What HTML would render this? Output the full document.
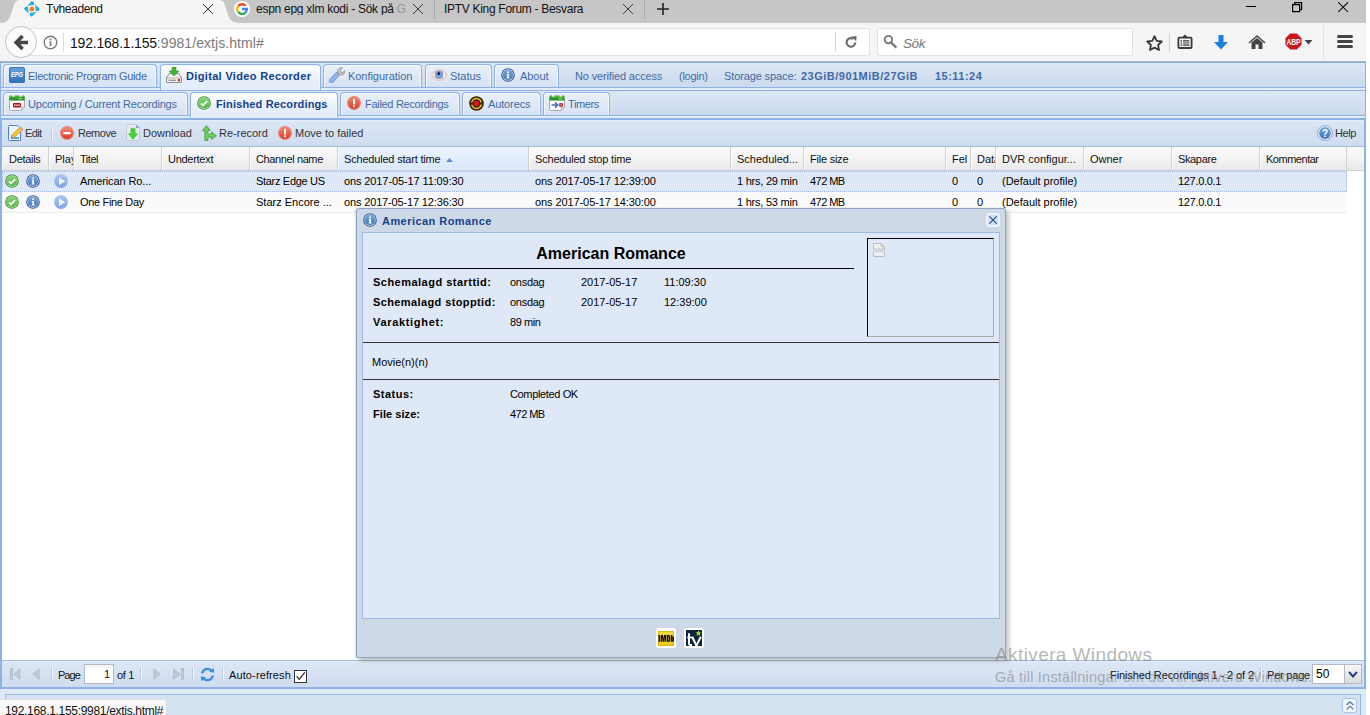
<!DOCTYPE html>
<html>
<head>
<meta charset="utf-8">
<title><i style="letter-spacing:-0.38px">Tvheadend</i></title>
<style>
*{box-sizing:border-box;margin:0;padding:0}
html,body{width:1370px;height:715px;overflow:hidden;background:#fff}
body{font-family:"Liberation Sans",sans-serif;font-size:11px;color:#000;position:relative}
.abs{position:absolute}
i{font-style:normal}
.t{position:absolute;white-space:nowrap;line-height:1}
/* ---------- browser chrome ---------- */
#tabbar{left:0;top:0;width:1366px;height:23px;background:#c6c6c6}
#navbar{left:0;top:23px;width:1366px;height:39px;background:#f5f5f5}
.btab{font-size:12px;color:#111;top:3px}
#urlbar{left:22px;top:28px;width:848px;height:28px;background:#fff;border:1px solid #e2e2e2;border-radius:2px}
#searchbar{left:877px;top:28px;width:256px;height:28px;background:#fff;border:1px solid #e2e2e2;border-radius:2px}
/* ---------- page ---------- */
#page{left:0;top:0;width:1366px;height:715px;overflow:hidden}
.tab{position:absolute;height:23px;border:1px solid #8db2e3;border-bottom:none;border-radius:4px 4px 0 0;background:linear-gradient(#e9f0fb,#d6e2f3);box-shadow:inset 1px 1px 0 #f4f8fd, inset -1px 0 0 #f4f8fd;color:#416aa3;font-size:11px;white-space:nowrap}
.tab.act{background:linear-gradient(#ffffff,#e6eefa 60%,#e3edfa);color:#15428b;font-weight:bold;height:26px}
.tab span{position:absolute;top:6px;line-height:11px}
.ttx{color:#416aa3;font-size:11px}
.tb{font-size:11px;color:#333}
.pg{font-size:11px;color:#111}
.mv{font-size:11px}
.hd{position:absolute;top:0;height:23px;border-right:1px solid #d0d0d0;border-left:1px solid #fcfcfc;font-size:11px;line-height:24px;padding-left:5px;white-space:nowrap;overflow:hidden;color:#111}
.row{position:absolute;left:2px;width:1345px;height:21px;font-size:11px}
.row span{position:absolute;top:3px;line-height:13px;white-space:nowrap;margin-left:-2px}
.lbl{font-weight:bold;font-size:11px}
</style>
</head>
<body>

<svg width="0" height="0" style="position:absolute">
 <defs>
  <linearGradient id="gG" x1="0" y1="0" x2="0" y2="1"><stop offset="0" stop-color="#86d676"/><stop offset="1" stop-color="#4fb044"/></linearGradient>
  <linearGradient id="gB" x1="0" y1="0" x2="0" y2="1"><stop offset="0" stop-color="#76a5dc"/><stop offset="1" stop-color="#4676b2"/></linearGradient>
  <linearGradient id="gP" x1="0" y1="0" x2="0" y2="1"><stop offset="0" stop-color="#aec8f3"/><stop offset="1" stop-color="#7ea4e6"/></linearGradient>
  <linearGradient id="gR" x1="0" y1="0" x2="0" y2="1"><stop offset="0" stop-color="#f58a72"/><stop offset="1" stop-color="#d93a2b"/></linearGradient>
  <linearGradient id="gE" x1="0" y1="0" x2="0" y2="1"><stop offset="0" stop-color="#6aa5dd"/><stop offset="1" stop-color="#2d6db3"/></linearGradient>
  <linearGradient id="gCal" x1="0" y1="0" x2="0" y2="1"><stop offset="0" stop-color="#57b947"/><stop offset="1" stop-color="#1f7f17"/></linearGradient>
  <symbol id="iCheck" viewBox="0 0 14 14"><circle cx="7" cy="7" r="6.8" fill="#3d8c35"/><circle cx="7" cy="7" r="5.9" fill="#9ddc8f"/><circle cx="7" cy="7" r="5.1" fill="url(#gG)"/><path d="M3.9,7.3 L6,9.4 L10.2,5" stroke="#fff" stroke-width="1.8" fill="none"/></symbol>
  <symbol id="iInfo" viewBox="0 0 14 14"><circle cx="7" cy="7" r="6.8" fill="#33578f"/><circle cx="7" cy="7" r="5.9" fill="#a6c3e8"/><circle cx="7" cy="7" r="5.1" fill="url(#gB)"/><circle cx="7" cy="4.3" r="1" fill="#fff"/><path d="M5.8,6 H7.9 V9.6 H8.6 V10.5 H5.6 V9.6 H6.3 V6.9 H5.8 Z" fill="#fff"/></symbol>
  <symbol id="iPlay" viewBox="0 0 14 14"><circle cx="7" cy="7" r="6.9" fill="url(#gP)"/><path d="M5,3.5 L11.2,7.2 L5,10.9 Z" fill="#edf3fd"/></symbol>
  <symbol id="iExcl" viewBox="0 0 14 14"><circle cx="7" cy="7" r="6.4" fill="url(#gR)" stroke="#ea8573" stroke-width="1.1"/><rect x="6.1" y="2.8" width="1.9" height="5.6" rx=".6" fill="#fff"/><circle cx="7.05" cy="10.3" r="1.05" fill="#fff"/></symbol>
  <symbol id="iRemove" viewBox="0 0 14 14"><circle cx="7" cy="7" r="6.4" fill="url(#gR)" stroke="#ea8573" stroke-width="1.1"/><rect x="3.4" y="5.9" width="7.2" height="2.3" rx=".5" fill="#fff"/></symbol>
  <symbol id="iX" viewBox="0 0 12 12"><path d="M1,1 L11,11 M11,1 L1,11" stroke="#333" stroke-width="1.15" fill="none"/></symbol>
 </defs>
</svg>

<!-- ================= BROWSER CHROME ================= -->
<div id="tabbar" class="abs"></div>
<div id="navbar" class="abs"></div>

<!-- active tab -->
<svg class="abs" style="left:0;top:0" width="246" height="23" viewBox="0 0 246 23">
  <path d="M0,23 C7,23 9,20 11,14 L14,5 C15,1 17,0 21,0 L219,0 C222,0 223.5,1 224.5,4 L228.5,16 C230.5,21 233,23 243,23 Z" fill="#f5f5f5"/>
</svg>
<!-- tvheadend favicon -->
<svg class="abs" style="left:24px;top:1px" width="16" height="16" viewBox="0 0 16 16">
  <g fill="#2aace3">
    <path id="bl" d="M7.9,0 L3.3,4.7 L9.8,4.3 L10.2,1.6 Z"/>
    <path d="M7.9,0 L3.3,4.7 L9.8,4.3 L10.2,1.6 Z" transform="rotate(90 7.9 7.9)"/>
    <path d="M7.9,0 L3.3,4.7 L9.8,4.3 L10.2,1.6 Z" transform="rotate(180 7.9 7.9)"/>
    <path d="M7.9,0 L3.3,4.7 L9.8,4.3 L10.2,1.6 Z" transform="rotate(270 7.9 7.9)"/>
  </g>
  <circle cx="7.9" cy="7.9" r="3.5" fill="#f8fcfe"/><circle cx="7.9" cy="7.9" r="2.5" fill="#f5861f"/>
</svg>
<div class="t btab" style="left:46px"><i style="letter-spacing:-0.38px">Tvheadend</i></div>
<svg class="abs" style="left:202px;top:3px" width="12" height="12" viewBox="0 0 12 12"><path d="M1,1 L11,11 M11,1 L1,11" stroke="#3a3a3a" stroke-width="1" fill="none"/></svg>

<!-- tab 2 -->
<svg class="abs" style="left:234px;top:1px" width="16" height="16" viewBox="0 0 16 16">
  <circle cx="8" cy="8" r="8" fill="#fff"/>
  <path d="M8,3.2 A4.8,4.8 0 0 1 11.6,4.8" stroke="#ea4335" stroke-width="2.4" fill="none"/>
  <path d="M4.2,5 A4.8,4.8 0 0 1 8,3.2" stroke="#ea4335" stroke-width="2.4" fill="none"/>
  <path d="M4.2,11 A4.8,4.8 0 0 1 4.2,5" stroke="#fbbc05" stroke-width="2.4" fill="none"/>
  <path d="M11.6,11.4 A4.8,4.8 0 0 1 4.2,11" stroke="#34a853" stroke-width="2.4" fill="none"/>
  <path d="M8,8 L12.8,8 A4.8,4.8 0 0 1 11.6,11.4" stroke="#4285f4" stroke-width="2.4" fill="none"/>
</svg>
<div class="t btab" style="left:256px;width:150px;overflow:hidden;letter-spacing:-.27px">espn epg xlm kodi - Sök på <span style="color:#999">G</span></div>
<svg class="abs" style="left:412px;top:3px" width="12" height="12" viewBox="0 0 12 12"><path d="M1,1 L11,11 M11,1 L1,11" stroke="#3a3a3a" stroke-width="1" fill="none"/></svg>
<div class="abs" style="left:434px;top:0;width:1px;height:19px;background:#a9a9a9"></div>
<!-- tab 3 -->
<div class="t btab" style="left:444px"><i style="letter-spacing:-0.3px">IPTV King Forum - Besvara</i></div>
<svg class="abs" style="left:622px;top:3px" width="12" height="12" viewBox="0 0 12 12"><path d="M1,1 L11,11 M11,1 L1,11" stroke="#3a3a3a" stroke-width="1" fill="none"/></svg>
<div class="abs" style="left:644px;top:0;width:1px;height:19px;background:#a9a9a9"></div>
<svg class="abs" style="left:656px;top:2px" width="14" height="14" viewBox="0 0 14 14"><path d="M7,1 L7,13 M1,7 L13,7" stroke="#222" stroke-width="1.6" fill="none"/></svg>

<!-- window controls -->
<div class="abs" style="left:1246px;top:6px;width:10px;height:1px;background:#000"></div>
<svg class="abs" style="left:1292px;top:2px" width="11" height="11" viewBox="0 0 11 11"><path d="M0.6,2.6 H7.6 V9.6 H0.6 Z M2.6,2.6 V0.6 H9.6 V7.6 H7.6" stroke="#000" stroke-width="1.15" fill="none"/></svg>
<svg class="abs" style="left:1338px;top:2px" width="11" height="11" viewBox="0 0 11 11"><path d="M0.3,0.3 L10,10 M10,0.3 L0.3,10" stroke="#000" stroke-width="1.05" fill="none"/></svg>

<!-- nav bar -->
<div id="urlbar" class="abs"></div>
<div class="abs" style="left:5px;top:26px;width:32px;height:32px;border-radius:50%;background:#fbfbfb;border:1px solid #c2c2c2"></div>
<svg class="abs" style="left:13px;top:33.5px" width="17" height="17" viewBox="0 0 17 17"><path d="M15,8.5 H4.5 M9.6,2 L3.1,8.5 L9.6,15" stroke="#444" stroke-width="3.5" fill="none" stroke-linejoin="miter"/></svg>
<svg class="abs" style="left:42.5px;top:34.5px" width="15" height="15" viewBox="0 0 15 15"><circle cx="7.5" cy="7.5" r="6.3" stroke="#7a7a7a" stroke-width="1.4" fill="none"/><rect x="6.6" y="6.3" width="1.8" height="4.6" fill="#7a7a7a"/><rect x="6.6" y="3.6" width="1.8" height="1.8" fill="#7a7a7a"/></svg>
<div class="abs" style="left:63px;top:33px;width:1px;height:19px;background:#dcdcdc"></div>
<div class="t" style="left:70px;top:36px;font-size:14px;color:#111"><i style="letter-spacing:-0.21px">192.168.1.155</i><span style="color:#7a7a7a"><i style="letter-spacing:0.07px">:9981/extjs.html#</i></span></div>
<div class="abs" style="left:835px;top:32px;width:1px;height:20px;background:#d8d8d8"></div>
<svg class="abs" style="left:844px;top:35px" width="14" height="14" viewBox="0 0 14 14"><path d="M11.2,7.4 A4.3,4.3 0 1 1 9.4,3.9" stroke="#6a6a6a" stroke-width="2.1" fill="none"/><path d="M7.4,1.4 L12.6,1 L12.2,6.2 Z" fill="#6a6a6a"/></svg>

<div id="searchbar" class="abs"></div>
<svg class="abs" style="left:882px;top:34px" width="15" height="15" viewBox="0 0 15 15"><circle cx="6.4" cy="5.6" r="3.7" stroke="#7a7a7a" stroke-width="1.9" fill="none"/><path d="M9.2,8.6 L14.4,13.6" stroke="#7a7a7a" stroke-width="2.3" /></svg>
<div class="t" style="left:903px;top:37px;font-size:13.5px;color:#777;font-style:italic;letter-spacing:-.4px">Sök</div>

<!-- toolbar icons -->
<svg class="abs" style="left:1144.5px;top:33.5px" width="19" height="18" viewBox="0 0 19 18"><path d="M9.5,2.2 L11.7,6.9 L16.8,7.5 L13.1,11 L14,16 L9.5,13.6 L5,16 L5.9,11 L2.2,7.5 L7.3,6.9 Z" stroke="#3a3a3a" stroke-width="1.8" fill="none" stroke-linejoin="round"/></svg>
<div class="abs" style="left:1169px;top:33px;width:1px;height:19px;background:#d0d0d0"></div>
<svg class="abs" style="left:1177px;top:34px" width="16" height="16" viewBox="0 0 16 16"><rect x="1.4" y="3.6" width="13.2" height="10.4" rx="1" stroke="#3a3a3a" stroke-width="1.8" fill="none"/><path d="M5,3.4 L8,0.6 L11,3.4 Z" fill="#3a3a3a"/><path d="M3.6,6.8 H12.4 M3.6,9 H12.4 M3.6,11.2 H12.4" stroke="#3a3a3a" stroke-width="1.2"/><path d="M5.6,6 V12" stroke="#f5f5f5" stroke-width=".9"/></svg>
<svg class="abs" style="left:1213px;top:34px" width="16" height="17" viewBox="0 0 16 17"><path d="M5.5,1 H10.5 V8 H15 L8,15.5 L1,8 H5.5 Z" fill="#1a81e0"/></svg>
<svg class="abs" style="left:1248px;top:34px" width="18" height="16" viewBox="0 0 18 16"><path d="M9,1 L17.5,8.5 L16.6,9.5 L9,3 L1.4,9.5 L0.5,8.5 Z" fill="#444"/><path d="M3.5,8.5 L9,4 L14.5,8.5 V15 H10.5 V10.5 H7.5 V15 H3.5 Z" fill="#444"/></svg>
<svg class="abs" style="left:1284.5px;top:33.2px" width="17" height="17" viewBox="0 0 18 18"><path d="M5.5,0.5 H12.5 L17.5,5.5 V12.5 L12.5,17.5 H5.5 L0.5,12.5 V5.5 Z" fill="#c8161c"/><text x="9" y="12.7" font-family="Liberation Sans" font-weight="bold" font-size="10" fill="#fff" text-anchor="middle" textLength="15" lengthAdjust="spacingAndGlyphs">ABP</text></svg>
<svg class="abs" style="left:1304px;top:40px" width="9" height="5" viewBox="0 0 9 5"><path d="M0.5,0 H8.5 L4.5,4.5 Z" fill="#444"/></svg>
<div class="abs" style="left:1323px;top:25px;width:1px;height:35px;background:#e2e2e2"></div>
<div class="abs" style="left:1337px;top:35px;width:16px;height:3px;border-radius:1.5px;background:#444"></div>
<div class="abs" style="left:1337px;top:40px;width:16px;height:3px;border-radius:1.5px;background:#444"></div>
<div class="abs" style="left:1337px;top:45px;width:16px;height:3px;border-radius:1.5px;background:#444"></div>

<!-- ================= PAGE ================= -->
<div id="page" class="abs">
  <!-- outer frame lines -->
  <div class="abs" style="left:0;top:61px;width:1366px;height:1px;background:#a3b3cc"></div>
  <div class="abs" style="left:0;top:62px;width:1366px;height:1px;background:#8db2e3"></div>

  <!-- main tab strip y 63..87 -->
  <div class="abs" style="left:0;top:63px;width:1366px;height:24px;background:linear-gradient(#dce7f5,#ccdaee)"></div>
  <div class="abs" style="left:0;top:87px;width:1366px;height:1px;background:#8db2e3"></div>
  <div class="abs" style="left:0;top:88px;width:1366px;height:2px;background:#e3edfa"></div>
  <div class="abs" style="left:0;top:90px;width:1366px;height:1px;background:#8db2e3"></div>
  <!-- second strip y 91..115 -->
  <div class="abs" style="left:0;top:91px;width:1366px;height:24px;background:linear-gradient(#dce7f5,#ccdaee)"></div>
  <div class="abs" style="left:0;top:115px;width:1366px;height:1px;background:#8db2e3"></div>
  <div class="abs" style="left:0;top:116px;width:1366px;height:2px;background:#e3edfa"></div>
  <div class="abs" style="left:0;top:118px;width:1366px;height:2px;background:#8db2e3"></div>

  <!-- row 1 tabs -->
  <div class="tab" style="left:3px;top:64px;width:154px"><span style="left:24px"><i style="letter-spacing:-0.3px">Electronic Program Guide</i></span></div>
  <div class="tab act" style="left:160px;top:64px;width:161px"><span style="left:25px"><i style="letter-spacing:0.34px">Digital Video Recorder</i></span></div>
  <div class="tab" style="left:323px;top:64px;width:99px"><span style="left:24px"><i style="letter-spacing:-0.04px">Konfiguration</i></span></div>
  <div class="tab" style="left:425px;top:64px;width:67px"><span style="left:24px"><i style="letter-spacing:-0.04px">Status</i></span></div>
  <div class="tab" style="left:494px;top:64px;width:65px"><span style="left:25px"><i style="letter-spacing:-0.04px">About</i></span></div>
  <div class="t ttx" id="tx_nva" style="left:575px;top:71px"><i style="letter-spacing:-0.15px">No verified access</i></div>
  <div class="t ttx" id="tx_login" style="left:679px;top:71px"><i style="letter-spacing:-0.26px">(login)</i></div>
  <div class="t ttx" id="tx_ss" style="left:724px;top:71px"><i style="letter-spacing:-0.12px">Storage space:</i></div>
  <div class="t ttx" id="tx_gib" style="left:801px;top:71px;font-weight:bold"><i style="letter-spacing:0.49px">23GiB/901MiB/27GiB</i></div>
  <div class="t ttx" id="tx_time" style="left:935px;top:71px;font-weight:bold"><i style="letter-spacing:0.48px">15:11:24</i></div>

  <!-- row 2 tabs -->
  <div class="tab" style="left:3px;top:92px;width:185px"><span style="left:24px"><i style="letter-spacing:-0.18px">Upcoming / Current Recordings</i></span></div>
  <div class="tab act" style="left:190px;top:92px;width:148px"><span style="left:25px"><i style="letter-spacing:0.15px">Finished Recordings</i></span></div>
  <div class="tab" style="left:340px;top:92px;width:120px"><span style="left:24px"><i style="letter-spacing:-0.3px">Failed Recordings</i></span></div>
  <div class="tab" style="left:462px;top:92px;width:79px"><span style="left:25px"><i style="letter-spacing:-0.13px">Autorecs</i></span></div>
  <div class="tab" style="left:543px;top:92px;width:67px"><span style="left:24px"><i style="letter-spacing:-0.4px">Timers</i></span></div>

  <!-- toolbar y 120..146 -->
  <div class="abs" style="left:0;top:120px;width:1366px;height:26px;background:linear-gradient(#e6eefa 0,#dbe6f5 8%,#cfdcef 100%)"></div>
  <div class="abs" style="left:0;top:146px;width:1366px;height:1px;background:#a4bbd6"></div>
  <div class="t tb" style="left:25px;top:128px"><i style="letter-spacing:-0.66px">Edit</i></div>
  <div class="abs" style="left:51px;top:127px;width:1px;height:13px;background:#b6cbe6"></div>
  <div class="abs" style="left:52px;top:127px;width:1px;height:13px;background:#f6f9fd"></div>
  <div class="t tb" style="left:78px;top:128px"><i style="letter-spacing:-0.49px">Remove</i></div>
  <div class="t tb" style="left:143px;top:128px">Download</div>
  <div class="t tb" style="left:219px;top:128px">Re-record</div>
  <div class="t tb" style="left:295px;top:128px">Move to failed</div>
  <div class="t tb" style="left:1335px;top:128px"><i style="letter-spacing:-0.41px">Help</i></div>

  <!-- grid -->
  <div class="abs" id="grid" style="left:0;top:147px;width:1366px;height:513px;background:#fff">
    <div class="abs" style="left:0;top:0;width:1366px;height:23px;background:linear-gradient(#f9f9f9 0,#f4f4f4 45%,#e9e9e9 100%)"></div>
    <div class="abs" style="left:0;top:23px;width:1366px;height:1px;background:#d0d0d0"></div>
    <div class="hd" style="left:2px;width:47px;padding-left:6px"><i style="letter-spacing:-0.3px">Details</i></div>
    <div class="hd" style="left:49px;width:25px">Play</div>
    <div class="hd" style="left:74px;width:88px"><i style="letter-spacing:-0.47px">Titel</i></div>
    <div class="hd" style="left:162px;width:88px"><i style="letter-spacing:-0.28px">Undertext</i></div>
    <div class="hd" style="left:250px;width:88px"><i style="letter-spacing:-0.39px">Channel name</i></div>
    <div class="hd" style="left:338px;width:191px;background:linear-gradient(#ebf3fd,#d9e8fb)"><i style="letter-spacing:-0.19px">Scheduled start time</i></div>
    <div class="hd" style="left:529px;width:202px"><i style="letter-spacing:-0.19px">Scheduled stop time</i></div>
    <div class="hd" style="left:731px;width:73px">Scheduled...</div>
    <div class="hd" style="left:804px;width:142px"><i style="letter-spacing:-0.23px">File size</i></div>
    <div class="hd" style="left:946px;width:25px">Fel</div>
    <div class="hd" style="left:971px;width:25px">Data</div>
    <div class="hd" style="left:996px;width:88px">DVR configur...</div>
    <div class="hd" style="left:1084px;width:88px">Owner</div>
    <div class="hd" style="left:1172px;width:88px"><i style="letter-spacing:-0.36px">Skapare</i></div>
    <div class="hd" style="left:1260px;width:87px"><i style="letter-spacing:-0.48px">Kommentar</i></div>
    <svg class="abs" style="left:446px;top:11px" width="7" height="4" viewBox="0 0 7 4"><path d="M0,4 L3.5,0 L7,4 Z" fill="#5d8cc9"/></svg>

    <div class="row" style="top:24px;background:#dfe8f6;border-top:1px dotted #a3bae9;border-bottom:1px dotted #a3bae9;border-right:1px dotted #a3bae9"><div class="abs" style="left:0;top:0;width:0;height:19px;border-left:1px dotted #a3bae9"></div>
      <span style="left:80px"><i style="letter-spacing:-0.12px">American Ro...</i></span><span style="left:256px"><i style="letter-spacing:-0.31px">Starz Edge US</i></span><span style="left:344px"><i style="letter-spacing:-0.11px">ons 2017-05-17 11:09:30</i></span><span style="left:535px"><i style="letter-spacing:-0.09px">ons 2017-05-17 12:39:00</i></span><span style="left:737px"><i style="letter-spacing:-0.23px">1 hrs, 29 min</i></span><span style="left:810px"><i style="letter-spacing:-0.54px">472 MB</i></span><span style="left:952px">0</span><span style="left:977px">0</span><span style="left:1002px">(Default profile)</span><span style="left:1178px"><i style="letter-spacing:-0.31px">127.0.0.1</i></span>
    </div>
    <div class="row" style="top:45px;background:#fafafa;border-top:1px solid #fafafa;border-bottom:1px solid #ededed">
      <span style="left:80px"><i style="letter-spacing:-0.33px">One Fine Day</i></span><span style="left:256px">Starz Encore ...</span><span style="left:344px"><i style="letter-spacing:-0.15px">ons 2017-05-17 12:36:30</i></span><span style="left:535px"><i style="letter-spacing:-0.09px">ons 2017-05-17 14:30:00</i></span><span style="left:737px"><i style="letter-spacing:-0.23px">1 hrs, 53 min</i></span><span style="left:810px"><i style="letter-spacing:-0.54px">472 MB</i></span><span style="left:952px">0</span><span style="left:977px">0</span><span style="left:1002px">(Default profile)</span><span style="left:1178px"><i style="letter-spacing:-0.31px">127.0.0.1</i></span>
    </div>
  </div>

  <!-- paging toolbar y 660..688 -->
  <div class="abs" style="left:0;top:660px;width:1366px;height:1px;background:#a4bbd6"></div>
  <div class="abs" style="left:0;top:661px;width:1366px;height:26px;background:linear-gradient(#e6eefa 0,#dbe6f5 8%,#cfdcef 100%)"></div>
  <div class="abs" style="left:0;top:687px;width:1366px;height:2px;background:#8db2e3"></div>
  <div class="t pg" style="left:58px;top:670px"><i style="letter-spacing:-0.97px">Page</i></div>
  <div class="abs" style="left:84px;top:664px;width:30px;height:20px;background:linear-gradient(#f1f1f1,#fff 4px);border:1px solid #b5b8c8"></div>
  <div class="t pg" style="left:104px;top:669px">1</div>
  <div class="t pg" style="left:117px;top:670px"><i style="letter-spacing:-0.29px">of 1</i></div>
  <div class="t pg" style="left:229px;top:670px"><i style="letter-spacing:0.12px">Auto-refresh</i></div>
  <div class="abs" style="left:294px;top:670px;width:13px;height:13px;background:#fff;border:1px solid #333"></div>
  <div class="t pg" style="left:1110px;top:670px"><i style="letter-spacing:-0.09px">Finished Recordings 1 - 2 of 2</i></div>
  <div class="t pg" style="left:1267px;top:670px"><i style="letter-spacing:-0.21px">Per page</i></div>
  <div class="abs" style="left:1312px;top:664px;width:50px;height:20px;background:#fff;border:1px solid #b5b8c8"></div>
  <div class="t" style="left:1316px;top:668px;font-size:12px">50</div>

  <!-- bottom bar y 689..715 -->
  <div class="abs" style="left:0;top:689px;width:1366px;height:26px;background:#dfe8f6"></div>
  <div class="abs" style="left:5px;top:694px;width:1356px;height:21px;background:#d3e1f1;border:1px solid #99bbe8;border-bottom:none"></div>

  <!-- page side borders -->
  <div class="abs" style="left:0;top:62px;width:1px;height:627px;background:#8db2e3"></div>
  <div class="abs" style="left:1px;top:118px;width:1px;height:571px;background:#8db2e3"></div>
  <div class="abs" style="left:1365px;top:62px;width:1px;height:627px;background:#8db2e3"></div>
  <div class="abs" style="left:1364px;top:118px;width:1px;height:571px;background:#8db2e3"></div>


  <!-- ============ ICONS ============ -->
  <!-- EPG -->
  <svg class="abs" style="left:9px;top:67px" width="16" height="16" viewBox="0 0 16 16"><rect x="0" y="0" width="16" height="16" rx="2" fill="url(#gE)"/><rect x="0.5" y="0.5" width="15" height="15" rx="2" fill="none" stroke="#3a74b4" stroke-width="1"/><text x="8" y="10.2" font-family="Liberation Sans" font-weight="bold" font-style="italic" font-size="6.4" fill="#fff" text-anchor="middle" textLength="12" lengthAdjust="spacingAndGlyphs">EPG</text></svg>
  <!-- DVR -->
  <svg class="abs" style="left:166px;top:67px" width="16" height="16" viewBox="0 0 16 16"><path d="M3.2,6.5 H12.8 L15.5,11 V15 Q15.5,15.5 15,15.5 H1 Q0.5,15.5 0.5,15 V11 Z" fill="#f4f4f4" stroke="#8e8e8e" stroke-width="1"/><path d="M0.8,11 H15.2" stroke="#b0b0b0" stroke-width="1"/><rect x="2.5" y="12.6" width="7.5" height="1.4" fill="#9a9a9a"/><rect x="11.8" y="12.1" width="2.2" height="2.2" fill="#d11a1a"/><path d="M6,0 H10 V4 H12.8 L8,9 L3.2,4 H6 Z" fill="#3fb62f" stroke="#2a8d1f" stroke-width=".6"/></svg>
  <!-- wrench -->
  <svg class="abs" style="left:329px;top:67px" width="16" height="16" viewBox="0 0 16 16"><path d="M2.4,13.8 L8.4,7.4" stroke="#6a97d8" stroke-width="4.8" stroke-linecap="round"/><path d="M2.4,13.8 L8.4,7.4" stroke="#94b9ee" stroke-width="3" stroke-linecap="round"/><path d="M8,8 L10.2,5.6" stroke="#a8a8a8" stroke-width="3"/><path d="M8.6,4.4 A3.6,3.6 0 0 1 13.4,0.9 L11.2,3.2 L11.8,5.2 L13.8,5.7 L15.7,3.4 A3.6,3.6 0 0 1 10.6,7.6 Z" fill="#c9c9c9" stroke="#8d8d8d" stroke-width=".8"/></svg>
  <!-- eye -->
  <svg class="abs" style="left:431px;top:68px" width="17" height="14" viewBox="0 0 17 14"><path d="M0.8,7 Q8.2,-4 15.8,7 Q8.2,17.5 0.8,7 Z" fill="#fff" stroke="#ecc9ae" stroke-width="1.5"/><circle cx="8.1" cy="6.8" r="4" fill="#7c9fe0"/><circle cx="8.1" cy="6.8" r="4" fill="none" stroke="#6a8fd6" stroke-width=".6"/><circle cx="7.8" cy="5.7" r="1.35" fill="#15151f"/></svg>
  <!-- about info -->
  <svg class="abs" style="left:501px;top:68px" width="14" height="14"><use href="#iInfo"/></svg>
  <!-- upcoming calendar -->
  <svg class="abs" style="left:9px;top:95px" width="16" height="16" viewBox="0 0 16 16"><path d="M1.5,0.8 H14.5 Q15.5,0.8 15.5,1.8 V12 L12,15.5 H1.5 Q0.5,15.5 0.5,14.5 V1.8 Q0.5,0.8 1.5,0.8 Z" fill="#fff" stroke="#a9a9a9" stroke-width="1"/><path d="M0.5,5.5 V2 Q0.5,0.8 1.7,0.8 H14.3 Q15.5,0.8 15.5,2 V5.5 Z" fill="url(#gCal)"/><rect x="3" y="0" width="2.6" height="1.6" fill="#e9f5e6"/><rect x="10.4" y="0" width="2.6" height="1.6" fill="#e9f5e6"/><rect x="9.5" y="3.3" width="3.6" height="1" fill="#9fe08f"/><rect x="4" y="8" width="8" height="4.4" rx="1" fill="#b3121b"/><rect x="5.2" y="9.5" width="1.4" height="1.4" fill="#fff"/><rect x="7.3" y="9.5" width="1.4" height="1.4" fill="#fff"/><rect x="9.4" y="9.5" width="1.4" height="1.4" fill="#fff"/><path d="M12,15.5 V12 H15.5 Z" fill="#ddd" stroke="#a9a9a9" stroke-width=".6"/></svg>
  <!-- finished check -->
  <svg class="abs" style="left:197px;top:96px" width="14" height="14"><use href="#iCheck"/></svg>
  <!-- failed excl -->
  <svg class="abs" style="left:347px;top:96px" width="14" height="14"><use href="#iExcl"/></svg>
  <!-- autorec -->
  <svg class="abs" style="left:469px;top:96px" width="15" height="15" viewBox="0 0 15 15"><circle cx="7.5" cy="7.5" r="7.3" fill="#33260f"/><circle cx="7.5" cy="7.5" r="4.9" fill="none" stroke="#f0be2c" stroke-width="1.5"/><path d="M0.8,6.4 L4.6,6.4 L2.8,9.2 Z M14.2,8.6 L10.4,8.6 L12.2,5.8 Z" fill="#33260f"/><circle cx="7.5" cy="7.5" r="2.8" fill="#e0161c"/></svg>
  <!-- timers -->
  <svg class="abs" style="left:549px;top:95px" width="16" height="16" viewBox="0 0 16 16"><path d="M1.5,0.8 H14.5 Q15.5,0.8 15.5,1.8 V12 L12,15.5 H1.5 Q0.5,15.5 0.5,14.5 V1.8 Q0.5,0.8 1.5,0.8 Z" fill="#fff" stroke="#a9a9a9" stroke-width="1"/><path d="M0.5,5.5 V2 Q0.5,0.8 1.7,0.8 H14.3 Q15.5,0.8 15.5,2 V5.5 Z" fill="url(#gCal)"/><rect x="3" y="0" width="2.6" height="1.6" fill="#e9f5e6"/><rect x="10.4" y="0" width="2.6" height="1.6" fill="#e9f5e6"/><rect x="9.5" y="3.3" width="3.6" height="1" fill="#9fe08f"/><path d="M2.5,10 H8.2 M6,7.4 L8.8,10 L6,12.6" stroke="#3d74b6" stroke-width="1.5" fill="none"/><rect x="10.3" y="8.2" width="3.6" height="3.6" fill="#b3121b"/><rect x="11.5" y="9.4" width="1.2" height="1.2" fill="#fff"/><path d="M12,15.5 V12 H15.5 Z" fill="#ddd" stroke="#a9a9a9" stroke-width=".6"/></svg>

  <!-- toolbar: edit -->
  <svg class="abs" style="left:8px;top:125px" width="16" height="16" viewBox="0 0 16 16"><path d="M1.5,0.5 H9.5 L12.5,3.5 V15.5 H1.5 Q0.5,15.5 0.5,14.5 V1.5 Q0.5,0.5 1.5,0.5 Z" fill="#eef5fd" stroke="#4a7fc4" stroke-width="1"/><rect x="3" y="12" width="8" height="2" fill="#58a6ea"/><path d="M3.2,12.8 L4.2,9.6 L12.4,1.8 L15,4.4 L6.6,12 Z" fill="#f4c63c" stroke="#c7962a" stroke-width=".8"/><path d="M3.2,12.8 L4.2,9.6 L6.6,12 Z" fill="#f3dcb4" stroke="#a87c3a" stroke-width=".5"/><path d="M3.2,12.8 L3.7,11.4 L4.6,12.4 Z" fill="#333"/><path d="M11.2,3 L13.8,5.6" stroke="#e2a0a0" stroke-width="1.6"/></svg>
  <svg class="abs" style="left:60px;top:126px" width="14" height="14"><use href="#iRemove"/></svg>
  <!-- download -->
  <svg class="abs" style="left:126px;top:124px" width="14" height="17" viewBox="0 0 14 17"><path d="M0.5,0.5 H10 L13.5,4 V16.5 H0.5 Z" fill="#e6e9ee" stroke="#c4c9d2" stroke-width="1"/><path d="M10,0.5 V4 H13.5 Z" fill="#7fa6dc"/><path d="M4.9,4.4 H9.1 V9.8 H11.6 L7,15.4 L2.4,9.8 H4.9 Z" fill="#45d236" stroke="#35b52a" stroke-width=".5"/></svg>
  <!-- re-record -->
  <svg class="abs" style="left:202px;top:125px" width="15" height="16" viewBox="0 0 15 16"><path d="M4.4,0.6 L8.2,5.4 H5.9 V8.2 Q6,9.4 7.4,9.4 H9.6 V7 L14.4,10.7 L9.6,14.4 V12 H6.4 Q5.9,12 5.9,12.5 V15.4 H2.9 V5.4 H0.6 Z" fill="#6fcf5f" stroke="#3f9e35" stroke-width=".9" stroke-linejoin="round"/></svg>
  <svg class="abs" style="left:278px;top:126px" width="14" height="14"><use href="#iExcl"/></svg>
  <!-- help -->
  <svg class="abs" style="left:1317px;top:125px" width="16" height="16" viewBox="0 0 16 16"><circle cx="8" cy="8" r="7.4" fill="#f4f8fd" stroke="#7fa3d6" stroke-width="1"/><circle cx="8" cy="8" r="5.9" fill="url(#gB)"/><text x="8" y="11.6" font-family="Liberation Sans" font-weight="bold" font-size="10" fill="#fff" text-anchor="middle">?</text></svg>

  <!-- grid row icons -->
  <svg class="abs" style="left:5px;top:174px" width="14" height="14"><use href="#iCheck"/></svg>
  <svg class="abs" style="left:26px;top:174px" width="14" height="14"><use href="#iInfo"/></svg>
  <svg class="abs" style="left:54px;top:174px" width="14" height="14"><use href="#iPlay"/></svg>
  <svg class="abs" style="left:5px;top:195px" width="14" height="14"><use href="#iCheck"/></svg>
  <svg class="abs" style="left:26px;top:195px" width="14" height="14"><use href="#iInfo"/></svg>
  <svg class="abs" style="left:54px;top:195px" width="14" height="14"><use href="#iPlay"/></svg>

  <!-- paging icons -->
  <svg class="abs" style="left:10px;top:668px" width="12" height="12" viewBox="0 0 12 12"><rect x="0.4" y="0.5" width="2.2" height="11" fill="#c3c9d3" stroke="#aab2bf" stroke-width=".6"/><path d="M10,0.8 V11.2 L4,6 Z" fill="#c3c9d3" stroke="#aab2bf" stroke-width=".6"/></svg>
  <svg class="abs" style="left:32px;top:668px" width="8" height="12" viewBox="0 0 8 12"><path d="M7.2,0.8 V11.2 L0.8,6 Z" fill="#c3c9d3" stroke="#aab2bf" stroke-width=".6"/></svg>
  <div class="abs" style="left:51px;top:667px;width:1px;height:14px;background:#b6cbe6"></div><div class="abs" style="left:52px;top:667px;width:1px;height:14px;background:#f6f9fd"></div>
  <div class="abs" style="left:140px;top:667px;width:1px;height:14px;background:#b6cbe6"></div><div class="abs" style="left:141px;top:667px;width:1px;height:14px;background:#f6f9fd"></div>
  <svg class="abs" style="left:153px;top:668px" width="8" height="12" viewBox="0 0 8 12"><path d="M0.8,0.8 V11.2 L7.2,6 Z" fill="#c3c9d3" stroke="#aab2bf" stroke-width=".6"/></svg>
  <svg class="abs" style="left:172px;top:668px" width="12" height="12" viewBox="0 0 12 12"><rect x="9.5" y="0.5" width="2" height="11" fill="#c3c9d3" stroke="#aab2bf" stroke-width=".6"/><path d="M1.5,0.8 V11.2 L8,6 Z" fill="#c3c9d3" stroke="#aab2bf" stroke-width=".6"/></svg>
  <div class="abs" style="left:192px;top:667px;width:1px;height:14px;background:#b6cbe6"></div><div class="abs" style="left:193px;top:667px;width:1px;height:14px;background:#f6f9fd"></div>
  <!-- refresh -->
  <svg class="abs" style="left:200px;top:667px" width="15" height="15" viewBox="0 0 15 15"><path d="M2.2,6.4 A5.3,5.3 0 0 1 11.4,3.6" stroke="#3f8be8" stroke-width="2.3" fill="none"/><path d="M9.2,4.8 L14.2,5.8 L13.6,0.8 Z" fill="#3f8be8"/><path d="M12.8,8.6 A5.3,5.3 0 0 1 3.6,11.4" stroke="#3f8be8" stroke-width="2.3" fill="none"/><path d="M5.8,10.2 L0.8,9.2 L1.4,14.2 Z" fill="#3f8be8"/></svg>
  <div class="abs" style="left:222px;top:667px;width:1px;height:14px;background:#b6cbe6"></div><div class="abs" style="left:223px;top:667px;width:1px;height:14px;background:#f6f9fd"></div>
  <svg class="abs" style="left:295px;top:671px" width="11" height="11" viewBox="0 0 11 11"><path d="M1.6,5.4 L4.2,8.4 L9.8,1.4" stroke="#222" stroke-width="1.2" fill="none"/></svg>
  <div class="abs" style="left:1260px;top:667px;width:1px;height:14px;background:#b6cbe6"></div><div class="abs" style="left:1261px;top:667px;width:1px;height:14px;background:#f6f9fd"></div>
  <!-- combo trigger -->
  <div class="abs" style="left:1344px;top:665px;width:17px;height:18px;background:linear-gradient(#f7f7f7,#dcdcdc);border-left:1px solid #b5b8c8"></div>
  <svg class="abs" style="left:1348px;top:671px" width="10" height="7" viewBox="0 0 10 7"><path d="M1,1 L5,5.4 L9,1" stroke="#1d3f8f" stroke-width="2" fill="none"/></svg>
  <!-- bottom expand -->
  <div class="abs" style="left:1342px;top:698px;width:15px;height:15px;border:1px solid #a9c4e8;border-radius:3px;background:#f1f6fd"></div>
  <svg class="abs" style="left:1345.5px;top:700.5px" width="8" height="10" viewBox="0 0 8 10"><path d="M0.6,4 L4,0.8 L7.4,4 M0.6,8.4 L4,5.2 L7.4,8.4" stroke="#466a94" stroke-width="1.15" fill="none"/></svg>

  <!-- ================= MODAL ================= -->
  <div class="abs" id="win" style="left:356px;top:208px;width:650px;height:450px;background:#ced9e7;border:1px solid #8ea4c1;border-radius:3px 3px 0 0;box-shadow:3px 3px 4px rgba(0,0,0,.24), -1px 0 2px rgba(0,0,0,.12)">
    <div class="t" id="tx_wt" style="left:25px;top:7px;font-size:11px;font-weight:bold;color:#15428b;letter-spacing:.45px">American Romance</div>
    <div class="abs" style="left:5px;top:23px;width:638px;height:387px;background:#dfe8f6;border:1px solid #99bbe8"></div>
    <div class="t" style="left:11px;top:37px;width:486px;text-align:center;font-size:16px;font-weight:bold">American Romance</div>
    <div class="abs" style="left:11px;top:59px;width:486px;height:1px;background:#000"></div>
    <div class="t lbl" style="left:16px;top:68px"><i style="letter-spacing:0.48px">Schemalagd starttid:</i></div>
    <div class="t mv" style="left:153px;top:68px"><i style="letter-spacing:-0.28px">onsdag</i></div><div class="t mv" style="left:224px;top:68px">2017-05-17</div><div class="t mv" style="left:307px;top:68px">11:09:30</div>
    <div class="t lbl" style="left:16px;top:88px"><i style="letter-spacing:0.39px">Schemalagd stopptid:</i></div>
    <div class="t mv" style="left:153px;top:88px"><i style="letter-spacing:-0.28px">onsdag</i></div><div class="t mv" style="left:224px;top:88px">2017-05-17</div><div class="t mv" style="left:307px;top:88px">12:39:00</div>
    <div class="t lbl" style="left:16px;top:108px"><i style="letter-spacing:0.68px">Varaktighet:</i></div>
    <div class="t mv" style="left:153px;top:108px"><i style="letter-spacing:-0.43px">89 min</i></div>
    <div class="abs" style="left:510px;top:29px;width:127px;height:99px;border:1px solid #000;border-right-color:#aaa;border-bottom-color:#aaa"></div>
    <div class="abs" style="left:6px;top:133px;width:636px;height:1px;background:#333"></div>
    <div class="t mv" style="left:15px;top:148px">Movie(n)(n)</div>
    <div class="abs" style="left:6px;top:170px;width:636px;height:1px;background:#333"></div>

    <svg class="abs" style="left:6px;top:4px" width="14" height="14"><use href="#iInfo"/></svg>
    <div class="abs" style="left:629px;top:4px;width:14px;height:14px;border:1px solid #f2f6fb;border-radius:3px;background:#d3e2f7;box-shadow:inset 0 0 0 1px #e6eefa"></div>
    <svg class="abs" style="left:632px;top:7px" width="8" height="8" viewBox="0 0 8 8"><path d="M0.3,0.3 L7.7,7.7 M7.7,0.3 L0.3,7.7" stroke="#2c4a92" stroke-width="1.15" fill="none"/></svg>
    <!-- broken image -->
    <svg class="abs" style="left:516px;top:34px" width="12" height="14" viewBox="0 0 13 15"><path d="M0.5,0.5 H9 L12.5,4 V7.2 L10.5,5.6 L8.4,7.6 L6.2,5.6 L4,7.6 L2,5.8 L0.5,7 Z" fill="#f0f0f0" stroke="#b9b9b9" stroke-width="1"/><path d="M9,0.5 V4 H12.5" fill="none" stroke="#b9b9b9" stroke-width="1"/><path d="M0.5,9.4 L2,8.2 L4,10 L6.2,8 L8.4,10 L10.5,8 L12.5,9.6 V14.5 H0.5 Z" fill="#f0f0f0" stroke="#b9b9b9" stroke-width="1"/></svg>
    <!-- imdb / tv buttons -->
    <svg class="abs" style="left:299px;top:419px" width="20" height="20" viewBox="0 0 20 20"><rect x="0" y="0" width="20" height="20" rx="2.6" fill="#fff"/><rect x="2" y="3" width="16" height="15" fill="#eccb25"/><rect x="2.4" y="3.4" width="15.2" height="14.2" fill="none" stroke="#d4ae16" stroke-width=".8"/><rect x="2.8" y="3.8" width="14.4" height="3" fill="#f3da40" opacity=".8"/><g fill="#161100" fill-rule="evenodd"><rect x="2.5" y="7" width="1.7" height="6.8"/><path d="M4.9,13.8 V7 H6.8 L7.45,10.4 L8.1,7 H10 V13.8 H8.6 V9.3 L7.9,13.8 H7 L6.3,9.3 V13.8 Z"/><path d="M10.7,7 H12.5 Q14.3,7 14.3,8.9 V11.9 Q14.3,13.8 12.5,13.8 H10.7 Z M12.2,8.3 V12.5 Q12.8,12.5 12.8,11.7 V9.1 Q12.8,8.3 12.2,8.3 Z"/><path d="M14.9,7 H16.4 V9.1 Q16.7,8.7 17.2,8.7 Q18,8.7 18,9.8 V12.7 Q18,13.8 17.2,13.8 Q16.7,13.8 16.4,13.4 V13.8 H14.9 Z M16.4,10 V12.6 H16.7 V10 Z"/></g></svg>
    <svg class="abs" style="left:327px;top:419px" width="20" height="20" viewBox="0 0 20 20"><rect x="0" y="0" width="20" height="20" rx="2.6" fill="#fff"/><rect x="2" y="2" width="16" height="16" fill="#0c2739"/><path d="M5,5.2 V15.4 Q5,16.9 6.6,16.9 H8" stroke="#fff" stroke-width="2" fill="none"/><path d="M3.2,9.5 H8.2" stroke="#fff" stroke-width="1.6"/><path d="M8.2,8.8 L12.4,17.6 L16.8,8.8" stroke="#fff" stroke-width="2" fill="none" stroke-linejoin="miter"/><path d="M14.5,2.2 L15.3,4.3 L17.6,4.4 L15.8,5.8 L16.4,8 L14.5,6.7 L12.6,8 L13.2,5.8 L11.4,4.4 L13.7,4.3 Z" fill="#a5d94e"/></svg>
    <div class="t lbl" style="left:16px;top:180px"><i style="letter-spacing:0.49px">Status:</i></div><div class="t mv" style="left:153px;top:180px"><i style="letter-spacing:-0.36px">Completed OK</i></div>
    <div class="t lbl" style="left:16px;top:200px"><i style="letter-spacing:0.06px">File size:</i></div><div class="t mv" style="left:153px;top:200px"><i style="letter-spacing:-0.54px">472 MB</i></div>
  </div>
</div>

<!-- status tooltip -->
<div class="abs" style="left:0;top:699px;width:167px;height:16px;background:#f8f8f8;border-top:1px solid #e4e4e4;border-right:1px solid #dcdcdc;border-radius:0 3px 0 0"></div>
<div class="t" style="left:5px;top:705px;font-size:12px;color:#111"><i style="letter-spacing:-0.31px">192.168.1.155:9981/extjs.html#</i></div>

<!-- windows watermark -->
<div class="t" style="left:995px;top:645px;font-size:19px;color:rgba(120,120,120,.55)"><i style="letter-spacing:0.4px">Aktivera Windows</i></div>
<div class="t" style="left:995px;top:670px;font-size:14.5px;color:rgba(120,120,120,.55)"><i style="letter-spacing:0.22px">Gå till Inställningar om du vill aktivera Windows.</i></div>

</body>
</html>
